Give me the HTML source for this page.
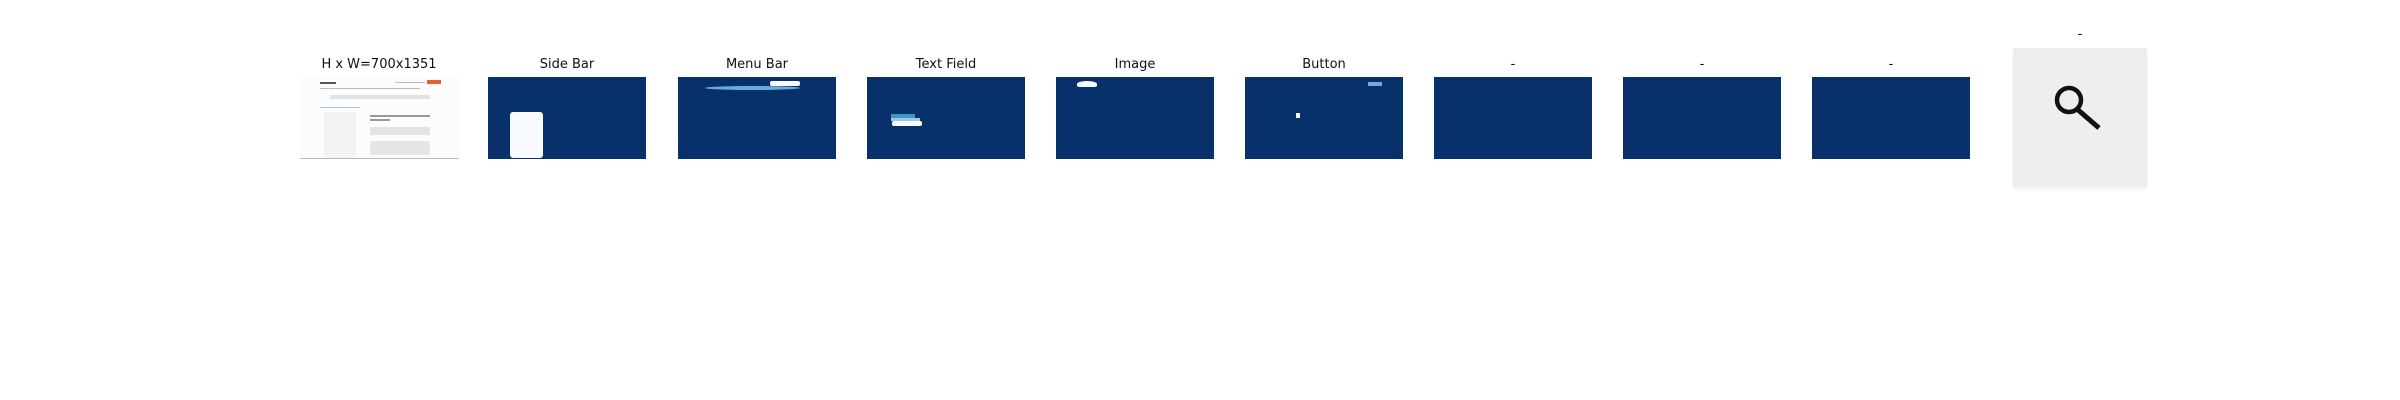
<!DOCTYPE html>
<html><head><meta charset="utf-8"><style>
body{margin:0;width:2400px;height:400px;background:#fff;position:relative;overflow:hidden;font-family:"DejaVu Sans","Liberation Sans",sans-serif}
.p{position:absolute;top:77px;width:158px;height:82px;background:#08306b}
.t{position:absolute;top:57px;width:158px;text-align:center;font-size:13px;color:#111}
.a{position:absolute}
</style></head><body>
<div class="t" style="left:300px">H x W=700x1351</div>
<div class="t" style="left:488px">Side Bar</div>
<div class="t" style="left:678px">Menu Bar</div>
<div class="t" style="left:867px">Text Field</div>
<div class="t" style="left:1056px">Image</div>
<div class="t" style="left:1245px">Button</div>
<div class="t" style="left:1434px">-</div>
<div class="t" style="left:1623px">-</div>
<div class="t" style="left:1812px">-</div>
<div class="t" style="left:2001px;top:27px">-</div>

<div class="a" style="left:300px;top:77px;width:159px;height:81px;background:#fcfcfc;border-bottom:1px solid #bbb;overflow:hidden">
 <div class="a" style="left:20px;top:5px;width:16px;height:2px;background:#555"></div>
 <div class="a" style="left:95px;top:5px;width:30px;height:1px;background:#bbb"></div>
 <div class="a" style="left:127px;top:3px;width:14px;height:4px;background:#ee5a32"></div>
 <div class="a" style="left:20px;top:11px;width:100px;height:1px;background:#bbb"></div>
 <div class="a" style="left:30px;top:18px;width:100px;height:4px;background:#e2e2e2"></div>
 <div class="a" style="left:20px;top:30px;width:40px;height:1px;background:#9cc"></div>
 <div class="a" style="left:24px;top:35px;width:32px;height:46px;background:#f3f3f3"></div>
 <div class="a" style="left:70px;top:38px;width:60px;height:2px;background:#999"></div>
 <div class="a" style="left:70px;top:42px;width:20px;height:2px;background:#999"></div>
 <div class="a" style="left:70px;top:50px;width:60px;height:8px;background:#e4e4e4"></div>
 <div class="a" style="left:70px;top:64px;width:60px;height:14px;background:#e6e6e6"></div>
</div>

<div class="p" style="left:488px"><div class="a" style="left:22px;top:35px;width:33px;height:46px;background:#f7fbff;border-radius:3px"></div></div>
<div class="p" style="left:678px">
 <div class="a" style="left:27px;top:9px;width:95px;height:4px;background:#6aaed6;border-radius:50%"></div>
 <div class="a" style="left:92px;top:4px;width:30px;height:5px;background:#f7fbff;border-radius:2px"></div>
</div>
<div class="p" style="left:867px">
 <div class="a" style="left:24px;top:37px;width:24px;height:5px;background:#4292c6"></div>
 <div class="a" style="left:24px;top:41px;width:29px;height:3px;background:#9ecae1"></div>
 <div class="a" style="left:25px;top:44px;width:30px;height:5px;background:#f7fbff;border-radius:2px"></div>
</div>
<div class="p" style="left:1056px"><div class="a" style="left:21px;top:4px;width:20px;height:6px;background:#f7fbff;border-radius:50% 50% 2px 2px"></div></div>
<div class="p" style="left:1245px">
 <div class="a" style="left:123px;top:5px;width:14px;height:4px;background:#6aaed6"></div>
 <div class="a" style="left:51px;top:36px;width:4px;height:5px;background:#f7fbff"></div>
</div>
<div class="p" style="left:1434px"></div>
<div class="p" style="left:1623px"></div>
<div class="p" style="left:1812px"></div>

<div class="a" style="left:2013px;top:48px;width:134px;height:139px;background:#eee;box-shadow:0 3px 3px #f4f4f4">
 <svg width="134" height="139" style="position:absolute;left:0;top:0">
  <circle cx="56" cy="52" r="12" fill="none" stroke="#111" stroke-width="4.5"/>
  <line x1="64" y1="61" x2="86" y2="80" stroke="#111" stroke-width="5"/>
 </svg>
</div>
</body></html>
